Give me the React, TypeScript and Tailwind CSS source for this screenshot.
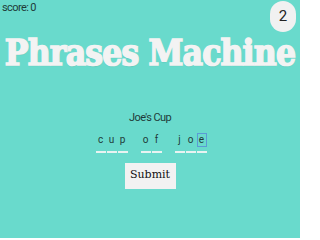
const phrase = ['cup', 'of', 'joe']

function LetterBox({ ch, focused }: { ch: string; focused?: boolean }) {
  return (
    <div className="flex flex-col items-center">
      <div
        className={
          focused
            ? 'w-[10px] h-[14px] flex items-center justify-center border border-[#5b9bd5] text-[10px] leading-none text-[#1f3b38]'
            : 'w-[10px] h-[14px] flex items-center justify-center border border-transparent text-[10px] leading-none text-[#1f3b38]'
        }
      >
        {ch}
      </div>
      <div className="w-[10px] h-[2px] mt-[4px] bg-[#e8f3f1]" />
    </div>
  )
}

export default function App() {
  return (
    <div className="w-[300px] h-[238px] bg-[#69dacc] overflow-hidden flex flex-col" style={{ fontFamily: 'Roboto, sans-serif' }}>
      <div className="flex justify-between items-start pl-[2px] pr-[4px] pt-[1px]">
        <span className="text-[11px] leading-[14px] tracking-[-0.6px] text-[#1f3b38]">score: 0</span>
        <div className="w-[26px] h-[31px] rounded-full bg-[#f1f1f1] flex items-center justify-center text-[15px] text-[#222]">
          2
        </div>
      </div>
      <h1
        className="whitespace-nowrap text-center text-[#f3f3f3] font-bold text-[35px] leading-none tracking-[-0.8px] mt-[3px] [-webkit-text-stroke:1.5px_#f3f3f3] [text-shadow:0_1px_1px_rgba(0,0,0,0.15)]"
        style={{ fontFamily: '"DejaVu Serif Condensed", "DejaVu Serif", serif', fontStretch: 'condensed' }}
      >
        Phrases Machine
      </h1>
      <p className="text-center text-[11px] tracking-[-0.6px] text-[#1f3b38] mt-[40px]">Joe's Cup</p>
      <div className="flex justify-center gap-[13px] mt-[6px] ml-[2px]">
        {phrase.map((word, wi) => (
          <div key={wi} className="flex gap-[1px]">
            {word.split('').map((ch, i) => (
              <LetterBox key={i} ch={ch} focused={wi === 2 && i === word.length - 1} />
            ))}
          </div>
        ))}
      </div>
      <div className="flex justify-center mt-[10px]">
        <button
          className="w-[51px] h-[26px] bg-[#f2f2f2] text-[11px] text-[#111]"
          style={{ fontFamily: '"DejaVu Serif", serif' }}
        >
          Submit
        </button>
      </div>
    </div>
  )
}
